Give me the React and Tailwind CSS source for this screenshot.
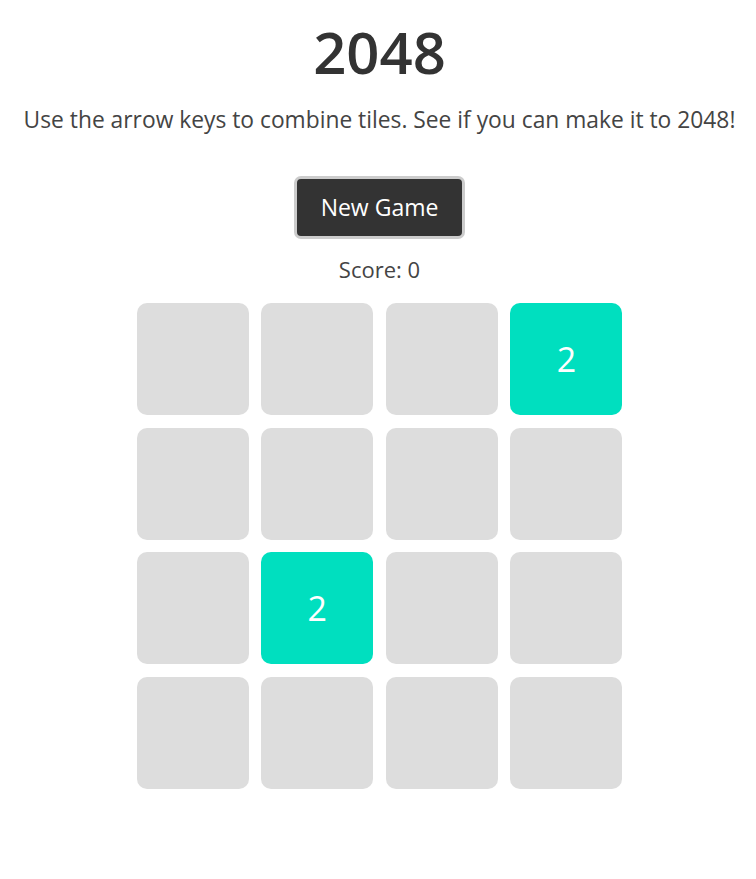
import React, { useState } from "react";

const start = [
  [0, 0, 0, 2],
  [0, 0, 0, 0],
  [0, 2, 0, 0],
  [0, 0, 0, 0],
];

function Tile({ value }) {
  return (
    <div
      className={
        "w-[112px] h-[112px] rounded-[10px] flex items-center justify-center text-[34px] text-white " +
        (value ? "bg-[#00dfbf]" : "bg-[#dddddd]")
      }
    >
      {value ? value : ""}
    </div>
  );
}

export default function App() {
  const [board] = useState(start);
  const [score] = useState(0);

  return (
    <div
      className="w-full min-h-[879px] bg-white flex flex-col items-center pl-[3px] text-[#333]"
      style={{ fontFamily: '"Open Sans", "Noto Sans", sans-serif' }}
    >
      <h1 className="text-[58px] font-semibold leading-[60px] mt-[22px] text-[#333]">
        2048
      </h1>
      <p className="text-[22.8px] leading-[30px] text-[#444] mt-[23px] whitespace-nowrap">
        Use the arrow keys to combine tiles. See if you can make it to 2048!
      </p>
      <button className="mt-[41px] w-[171px] h-[63px] bg-[#333] text-white text-[23px] rounded-[7px] border-[3px] border-[#cccccc]">
        New Game
      </button>
      <div className="mt-[16px] text-[22px] leading-[28px] text-[#444]">
        Score: {score}
      </div>
      <div className="mt-[20px] grid grid-cols-4 gap-x-[12.67px] gap-y-[12.5px]">
        {board.map((row, i) =>
          row.map((v, j) => <Tile key={i + "-" + j} value={v} />)
        )}
      </div>
    </div>
  );
}
